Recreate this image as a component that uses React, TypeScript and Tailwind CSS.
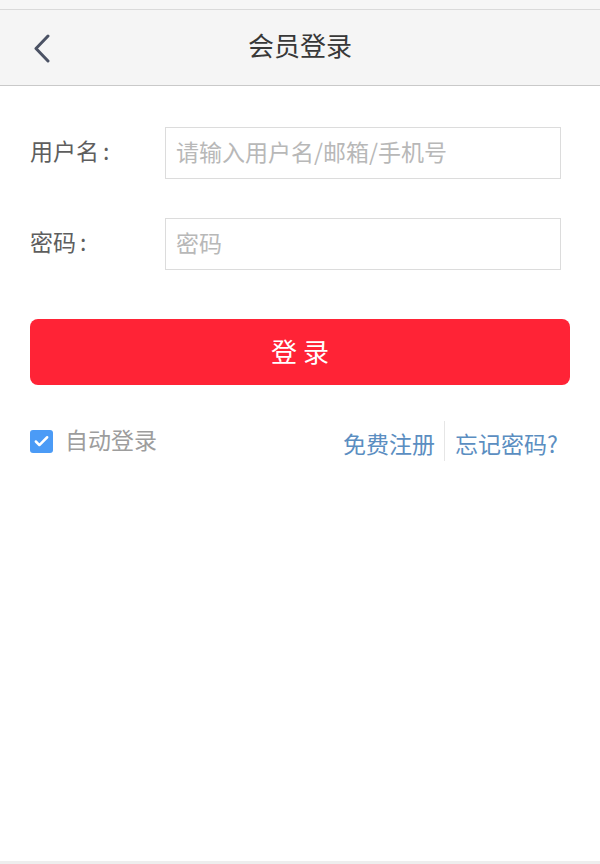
import { Check } from "lucide-react";

const font = { fontFamily: '"Noto Sans CJK SC", "Noto Sans", sans-serif' };

function Field({ label, placeholder, type = "text" }: { label: string; placeholder: string; type?: string }) {
  return (
    <div className="flex items-center">
      <label className="w-[135px] pb-[6px] text-[23px] leading-none text-[#5e5e5e]">
        {label}
        <span className="ml-[4px]">:</span>
      </label>
      <input
        type={type}
        placeholder={placeholder}
        className="h-[52px] w-[396px] border border-[#dcdcdc] bg-white px-[10px] pb-[5px] text-[23px] text-[#333] outline-none placeholder:text-[#b8b8b8]"
        style={font}
      />
    </div>
  );
}

export default function App() {
  return (
    <div className="flex min-h-[864px] flex-col bg-[#eeeeee]" style={font}>
      <div className="h-[10px] border-b border-[#dadada] bg-[#f6f6f6]" />
      <header className="relative flex h-[76px] items-center justify-center border-b border-[#c9c9c9] bg-[#f5f5f5] pb-[6px]">
        <button className="absolute left-[31px] top-[23px] flex h-[30px] w-[20px] items-center justify-center">
          <svg width="17" height="29" viewBox="0 0 17 29" fill="none">
            <path d="M15 2L3 14.5L15 27" stroke="#4b5264" strokeWidth="3" strokeLinecap="round" strokeLinejoin="round" />
          </svg>
        </button>
        <h1 className="text-[26px] font-normal leading-none text-[#383838]">会员登录</h1>
      </header>

      <main className="flex h-[775px] flex-col bg-white px-[30px] pt-[41px]">
        <Field label="用户名" placeholder="请输入用户名/邮箱/手机号" />
        <div className="mt-[39px]">
          <Field label="密码" placeholder="密码" type="password" />
        </div>

        <button className="mt-[49px] h-[66px] w-full rounded-[8px] bg-[#ff2336] pb-[2px] text-[26px] leading-none text-white">
          登 录
        </button>

        <div className="mt-[36px] flex h-[40px] items-center justify-between pr-[12px]">
          <label className="flex items-center gap-[12px]">
            <span className="flex h-[23px] w-[23px] items-center justify-center rounded-[3px] bg-[#4b9bf6]">
              <Check className="h-[17px] w-[17px] text-white" strokeWidth={3.5} />
            </span>
            <span className="pb-[4px] text-[23px] leading-none text-[#9d9d9d]">自动登录</span>
          </label>
          <div className="flex h-full items-stretch">
            <a className="flex items-center pt-[4px] pr-[9px] text-[23px] leading-none text-[#5b8ec1]">免费注册</a>
            <span className="w-px bg-[#e6e6e6]" />
            <a className="flex items-center pt-[4px] pl-[10px] text-[23px] leading-none text-[#5b8ec1]">忘记密码?</a>
          </div>
        </div>
      </main>
    </div>
  );
}
